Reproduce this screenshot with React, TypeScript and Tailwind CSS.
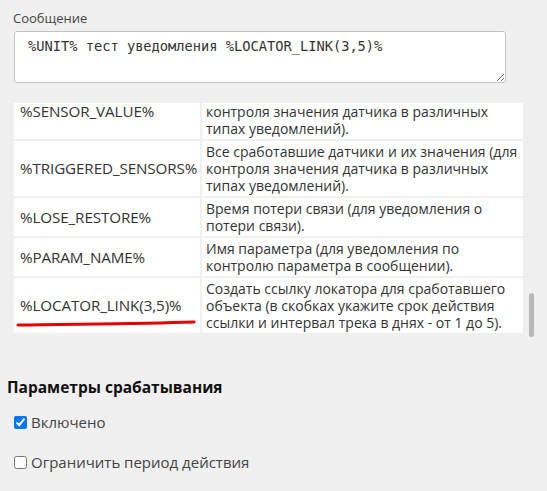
import React from "react";

const rows = [
  {
    key: "%SENSOR_VALUE%",
    lines: ["Значение датчика (для", "контроля значения датчика в различных", "типах уведомлений)."],
  },
  {
    key: "%TRIGGERED_SENSORS%",
    lines: [
      "Все сработавшие датчики и их значения (для",
      "контроля значения датчика в различных",
      "типах уведомлений).",
    ],
  },
  {
    key: "%LOSE_RESTORE%",
    lines: ["Время потери связи (для уведомления о", "потери связи)."],
  },
  {
    key: "%PARAM_NAME%",
    lines: ["Имя параметра (для уведомления по", "контролю параметра в сообщении)."],
  },
  {
    key: "%LOCATOR_LINK(3,5)%",
    lines: [
      "Создать ссылку локатора для сработавшего",
      "объекта (в скобках укажите срок действия",
      "ссылки и интервал трека в днях - от 1 до 5).",
    ],
  },
];

const App = () => {
  return (
    <div className="relative w-[547px] h-[491px] bg-[#f0f0f0] overflow-hidden font-['Open_Sans','Noto_Sans',sans-serif] text-[#333]">
      <div className="pl-[13px] pt-[9px] text-[13px] leading-[18px] text-[#444]">Сообщение</div>

      <textarea
        readOnly
        defaultValue="%UNIT% тест уведомления %LOCATOR_LINK(3,5)%"
        className="block ml-[14px] mt-[4px] w-[492px] h-[52px] bg-white border border-[#c4c4c4] rounded-[3px] px-[13px] pt-[5px] font-['DejaVu_Sans_Mono',monospace] text-[13.7px] leading-[18px] text-[#333] outline-none resize-y"
      />

      <div className="flex mt-[20px] ml-[14px] h-[236px]">
        <div className="w-[509px] h-full overflow-hidden">
          <div className="grid grid-cols-[186px_1fr] gap-[2px] -mt-[19px] leading-[17px]">
            {rows.map((r) => (
              <React.Fragment key={r.key}>
                <div className="bg-white flex items-center pl-[6px] text-[15.2px] tracking-[-0.1px]">{r.key}</div>
                <div className="bg-white pl-[4px] py-[2px] text-[14px] whitespace-nowrap">
                  {r.lines.map((l, i) => (
                    <div key={i}>{l}</div>
                  ))}
                </div>
              </React.Fragment>
            ))}
          </div>
        </div>
        <div className="relative w-[14px] h-full">
          <div className="absolute left-[6px] top-[190px] w-[5px] h-[44px] rounded-full bg-[#b8b8b8]" />
        </div>
      </div>

      <svg className="absolute left-[16px] top-[318px]" width="182" height="10" viewBox="0 0 182 10">
        <path d="M2 7 C 50 6, 120 6, 178 4" stroke="#e60000" strokeWidth="3" fill="none" strokeLinecap="round" />
      </svg>

      <div className="pl-[7px] mt-[38px] text-[15.5px] leading-[20px] font-bold text-[#111]">Параметры срабатывания</div>

      <label className="flex items-center gap-[4px] ml-[14px] mt-[16px] text-[15px] leading-[18px] text-[#444]">
        <input type="checkbox" defaultChecked className="m-0 w-[13px] h-[13px] accent-[#0075ff]" />
        Включено
      </label>

      <label className="flex items-center gap-[4px] ml-[14px] mt-[22px] text-[15px] leading-[18px] text-[#444]">
        <input type="checkbox" className="m-0 w-[13px] h-[13px]" />
        Ограничить период действия
      </label>
    </div>
  );
};

export default App;
